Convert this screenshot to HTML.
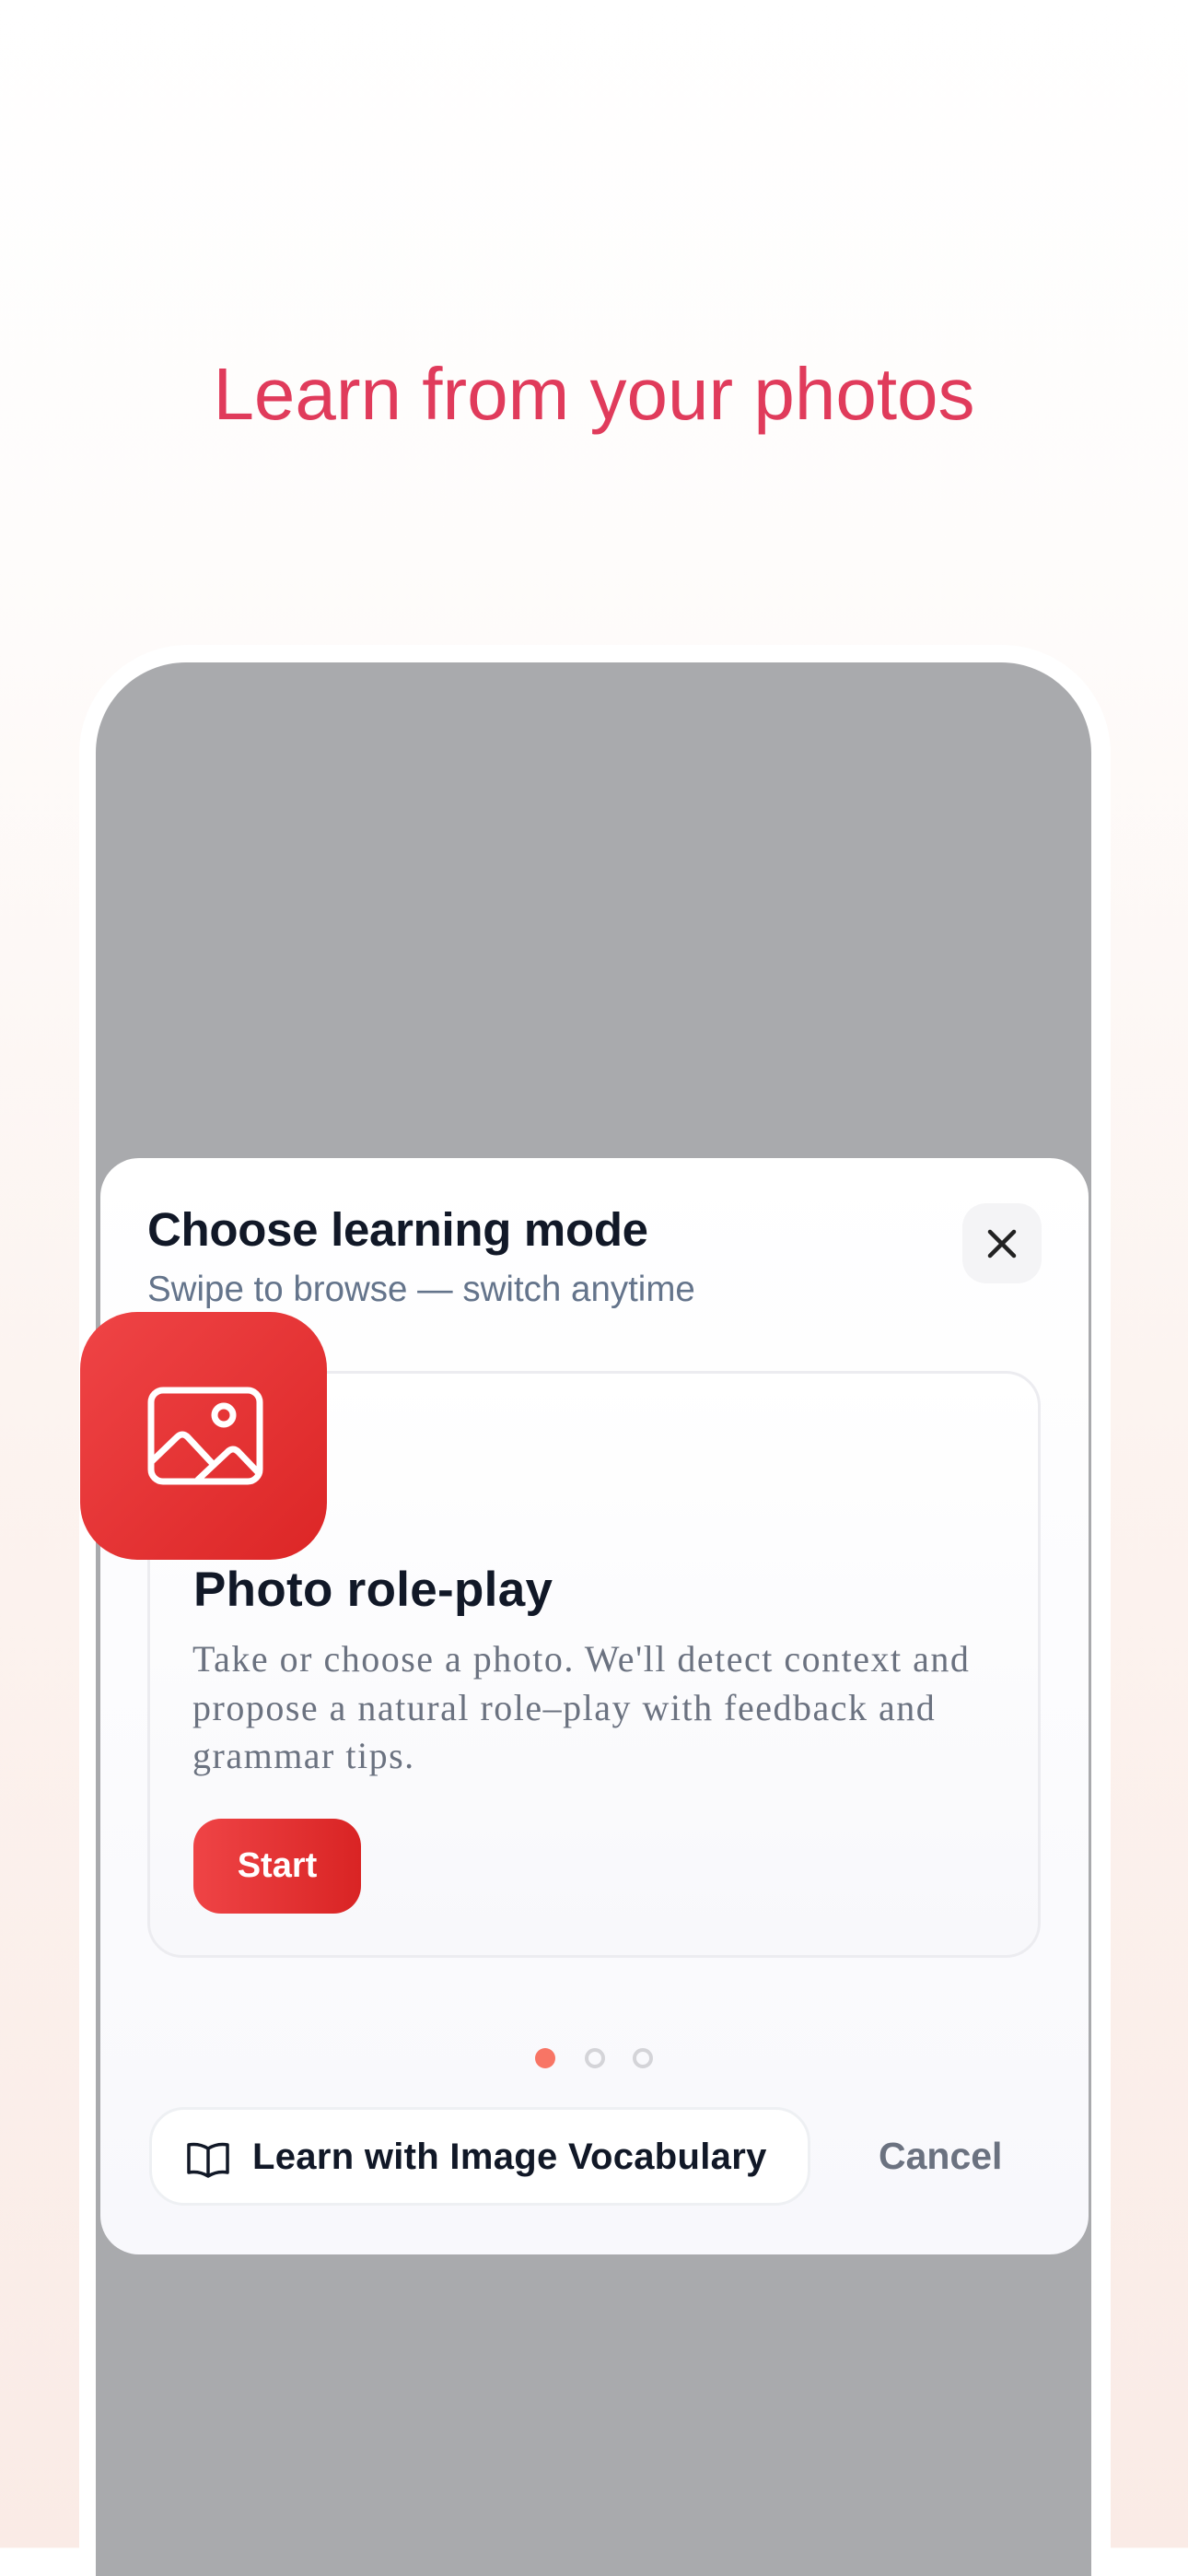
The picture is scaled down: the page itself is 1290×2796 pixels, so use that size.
<!DOCTYPE html>
<html><head><meta charset="utf-8">
<style>
*{margin:0;padding:0;box-sizing:border-box}
html,body{width:1290px;height:2796px;overflow:hidden}
body{position:relative;font-family:"Liberation Sans",sans-serif;background:linear-gradient(#ffffff 0px,#fefcfb 600px,#fcf3ef 1600px,#faebe6 2765px,#ffffff 2765px)}
.title{position:absolute;left:0;width:1290px;top:378px;text-align:center;font-size:80px;color:#e03b5b;line-height:100px}
.frame{position:absolute;left:86px;top:700px;width:1120px;height:2200px;background:#fff;border-radius:118px 118px 0 0}
.screen{position:absolute;left:104px;top:719px;width:1081px;height:2200px;background:#a9aaad;border-radius:98px 98px 0 0}
.sheet{position:absolute;left:109px;top:1257px;width:1073px;height:1190px;border-radius:42px;background:linear-gradient(#ffffff,#f8f8fc)}
.h1{position:absolute;left:160px;top:1305px;font-size:51px;font-weight:bold;color:#111827;letter-spacing:-0.3px}
.sub{position:absolute;left:160px;top:1378px;font-size:38.5px;color:#64748b}
.close{position:absolute;left:1045px;top:1306px;width:86px;height:87px;border-radius:26px;background:#f4f4f6}
.card{position:absolute;left:160px;top:1488px;width:970px;height:637px;border:3px solid #ececf0;border-radius:38px;background:linear-gradient(#ffffff,#f8f8fb)}
.tile{position:absolute;left:87px;top:1424px;width:268px;height:269px;border-radius:62px;background:linear-gradient(135deg,#ef4446,#dc2626)}
.h2{position:absolute;left:210px;top:1695px;font-size:53px;font-weight:bold;color:#111827;letter-spacing:0.3px}
.desc{position:absolute;left:209px;top:1775px;width:850px;font-family:"Liberation Serif","Noto Serif CJK SC",serif;font-size:40px;letter-spacing:1.5px;line-height:52.5px;color:#6b7280}
.start{position:absolute;left:210px;top:1974px;width:182px;height:103px;border-radius:30px;background:linear-gradient(90deg,#ef4446,#d92424);color:#fff;font-weight:bold;font-size:38px;text-align:center;line-height:103px}
.dot{position:absolute;top:2223px;width:22px;height:22px;border-radius:50%}
.vocab{position:absolute;left:162px;top:2287px;width:718px;height:107px;border:3px solid #eef0f3;border-radius:38px;background:#fff}
.vtext{position:absolute;left:274px;top:2319px;font-size:40px;font-weight:bold;color:#111827;letter-spacing:0.3px}
.cancel{position:absolute;left:954px;top:2317px;font-size:41px;font-weight:bold;color:#6b7280}
</style></head><body>
<div class="title">Learn from your photos</div>
<div class="frame"></div>
<div class="screen"></div>
<div class="sheet"></div>
<div class="h1">Choose learning mode</div>
<div class="sub">Swipe to browse — switch anytime</div>
<div class="close"><svg width="86" height="87" viewBox="0 0 86 87"><path d="M30 31 L56 57 M56 31 L30 57" stroke="#222" stroke-width="4.5" stroke-linecap="round"/></svg></div>
<div class="card"></div>
<div class="tile"><svg width="268" height="269" viewBox="0 0 268 269" fill="none" stroke="#fff" stroke-width="7" stroke-linecap="round" stroke-linejoin="round"><rect x="77" y="85" width="118" height="99" rx="13"/><circle cx="156" cy="112" r="10"/><path d="M78 162 L105 136 Q111 130 117 136 L145 166"/><path d="M128 182 L160 152 Q166 146 172 152 L193 174"/></svg></div>
<div class="h2">Photo role-play</div>
<div class="desc">Take or choose a photo. We'll detect context and propose a natural role–play with feedback and grammar tips.</div>
<div class="start">Start</div>
<div class="dot" style="left:581px;background:#f87565"></div>
<div class="dot" style="left:635px;border:4px solid #d4d4d8"></div>
<div class="dot" style="left:687px;border:4px solid #d4d4d8"></div>
<div class="vocab"></div>
<svg style="position:absolute;left:202px;top:2324px" width="48" height="42" viewBox="0 0 48 42" fill="none" stroke="#111827" stroke-width="3.5" stroke-linejoin="round"><path d="M24 8 Q14 2 3 4 L3 34 Q14 32 24 38 Q34 32 45 34 L45 4 Q34 2 24 8 Z M24 8 L24 38"/></svg>
<div class="vtext">Learn with Image Vocabulary</div>
<div class="cancel">Cancel</div>
</body></html>
